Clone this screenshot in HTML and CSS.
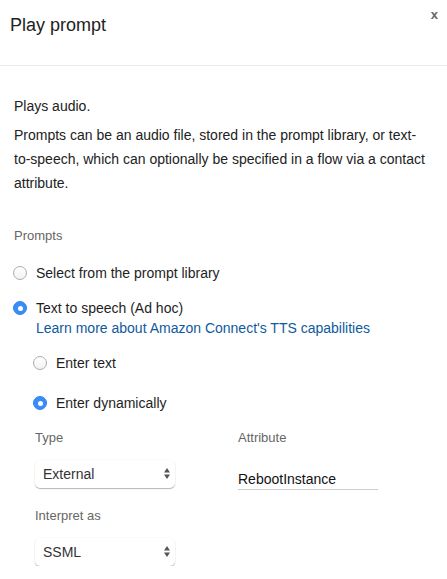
FILE: index.html
```html
<!DOCTYPE html>
<html lang="en">
<head>
<meta charset="utf-8">
<title>Play prompt</title>
<link rel="stylesheet" href="styles.css">
</head>
<body>
<div class="panel">
  <header class="head">
    <h1 class="title">Play prompt</h1>
    <button class="close" type="button">x</button>
  </header>
  <div class="content">
    <p class="intro">Plays audio.</p>
    <p class="intro">Prompts can be an audio file, stored in the prompt library, or text-to-speech, which can optionally be specified in a flow via a contact attribute.</p>
    <div class="label prompts-label">Prompts</div>
    <div class="options">
      <label class="option">
        <input class="radio" type="radio" name="src">
        <span>Select from the prompt library</span>
      </label>
      <label class="option">
        <input class="radio" type="radio" name="src" checked>
        <span class="stack">
          <span>Text to speech (Ad hoc)</span>
          <a class="link" href="#">Learn more about Amazon Connect's TTS capabilities</a>
        </span>
      </label>
      <div class="sub">
        <label class="option">
          <input class="radio" type="radio" name="mode">
          <span>Enter text</span>
        </label>
        <label class="option">
          <input class="radio" type="radio" name="mode" checked>
          <span>Enter dynamically</span>
        </label>
        <div class="fields">
          <div class="col col-left">
            <div class="label">Type</div>
            <div class="select">
              <span>External</span>
              <svg class="arrows" width="6" height="11" viewBox="0 0 6 11"><path d="M3 0 L6 4.5 L0 4.5 Z M3 11 L6 6.5 L0 6.5 Z" fill="#555"/></svg>
            </div>
            <div class="label interp">Interpret as</div>
            <div class="select">
              <span>SSML</span>
              <svg class="arrows" width="6" height="11" viewBox="0 0 6 11"><path d="M3 0 L6 4.5 L0 4.5 Z M3 11 L6 6.5 L0 6.5 Z" fill="#555"/></svg>
            </div>
          </div>
          <div class="col col-right">
            <div class="label">Attribute</div>
            <input class="text-input" type="text" value="RebootInstance">
          </div>
        </div>
      </div>
    </div>
  </div>
</div>
</body>
</html>
```
FILE: styles.css
```css
* { box-sizing: border-box; }
html, body { margin: 0; background: #fff; }
body {
  font-family: "Liberation Sans", Arial, Helvetica, sans-serif;
  font-size: 14px;
  color: #222;
}
.panel { width: 447px; }
.head {
  height: 66px;
  border-bottom: 1px solid #e9e9e9;
  display: flex;
  justify-content: space-between;
  align-items: flex-start;
  padding: 7px 9px 0 10px;
}
.title {
  margin: 7px 0 0;
  font-size: 18px;
  font-weight: normal;
  line-height: 22px;
  color: #222;
}
.close {
  font-family: inherit;
  font-size: 13px;
  font-weight: bold;
  line-height: 15px;
  color: #666;
  background: none;
  border: 0;
  padding: 0;
  cursor: pointer;
}
.content { padding: 28px 22px 0 14px; }
.intro { margin: 0 0 5px; line-height: 24px; }
.label { font-size: 13px; line-height: 20px; color: #666; }
.prompts-label { margin-top: 31px; }
.options {
  margin-top: 17px;
  margin-left: -1px;
  display: flex;
  flex-direction: column;
  gap: 15px;
}
.option {
  display: flex;
  align-items: flex-start;
  gap: 9px;
  line-height: 20px;
  color: #1e1e1e;
}
.stack { display: flex; flex-direction: column; }
.link { color: #0f5a9e; text-decoration: none; }
.radio {
  -webkit-appearance: none;
  appearance: none;
  margin: 3px 0 0;
  width: 14px;
  height: 14px;
  border-radius: 50%;
  border: 1px solid #adadad;
  background: linear-gradient(#ffffff, #f2f2f2);
  flex: none;
  position: relative;
}
.radio:checked {
  border-color: #2f85f3;
  background: #3a8cf6;
}
.radio:checked::after {
  content: "";
  position: absolute;
  left: 50%;
  top: 50%;
  width: 5px;
  height: 5px;
  margin: -2.5px 0 0 -2.5px;
  border-radius: 50%;
  background: #fff;
}
.sub {
  padding-left: 20px;
  display: flex;
  flex-direction: column;
  gap: 20px;
}
.fields {
  margin: -5px 0 0 2px;
  display: flex;
}
.col-left { width: 203px; display: flex; flex-direction: column; }
.col-right { width: 140px; display: flex; flex-direction: column; }
.select {
  margin-top: 11.5px;
  width: 140px;
  height: 28px;
  padding: 0 5px 0 8px;
  display: flex;
  align-items: center;
  justify-content: space-between;
  border-radius: 5px;
  background: #fff;
  box-shadow: 0 1px 1px rgba(0, 0, 0, 0.28), 0 0 0 0.5px rgba(0, 0, 0, 0.03);
  color: #333;
  line-height: 28px;
}
.arrows { flex: none; }
.interp { margin-top: 18.5px; }
.text-input {
  margin-top: 20.5px;
  width: 140px;
  height: 21px;
  padding: 0;
  border: 0;
  border-bottom: 1px solid #cfcfcf;
  font-family: inherit;
  font-size: 14px;
  line-height: 20px;
  color: #111;
  background: transparent;
  outline: none;
}
```
